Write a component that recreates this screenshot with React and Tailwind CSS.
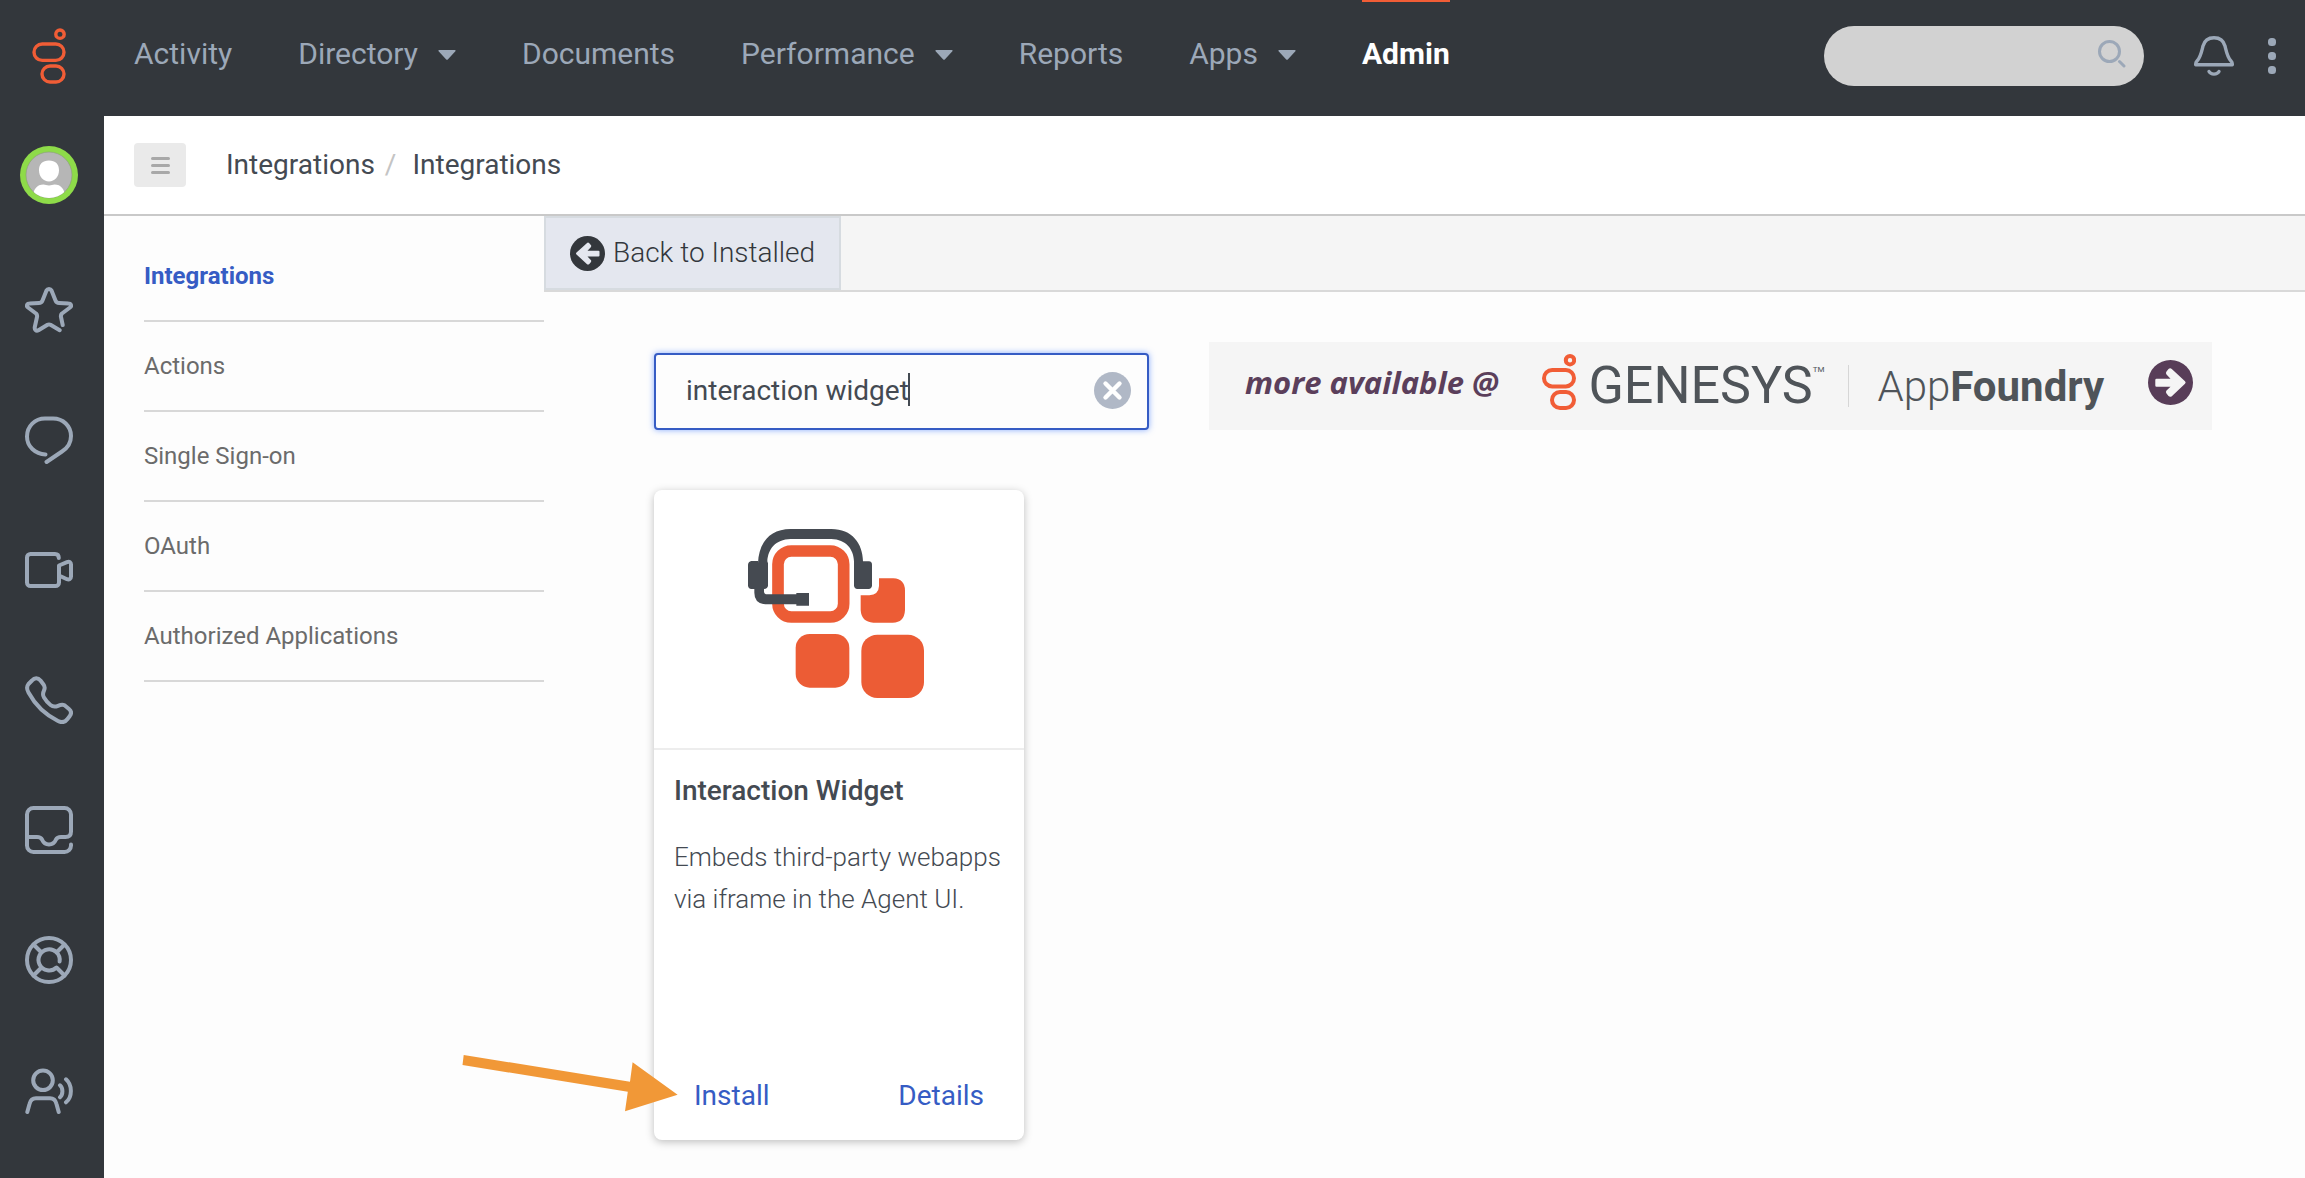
import React from "react";

const NAV = [
  { label: "Activity" },
  { label: "Directory", menu: true },
  { label: "Documents" },
  { label: "Performance", menu: true },
  { label: "Reports" },
  { label: "Apps", menu: true },
  { label: "Admin", active: true },
];

const SECTIONS = ["Integrations", "Actions", "Single Sign-on", "OAuth", "Authorized Applications"];

function GenesysMark({ className, stroke }) {
  return (
    <svg viewBox="0 0 34 56" className={className} fill="none" stroke="#f15d36" strokeWidth={stroke} aria-hidden="true">
      <circle cx="28" cy="6.2" r="4.2" />
      <rect x="2" y="16" width="30" height="16.4" rx="8.2" />
      <rect x="10" y="38" width="22" height="16" rx="8" />
    </svg>
  );
}

function RailIcon({ label, children }) {
  return (
    <button type="button" aria-label={label} className="block size-12 cursor-pointer">
      <svg viewBox="0 0 48 48" className="size-12" fill="none" stroke="#9ca8b8" strokeWidth="4" strokeLinecap="round" strokeLinejoin="round">
        {children}
      </svg>
    </button>
  );
}

function Rail() {
  return (
    <nav aria-label="Tools" className="flex w-[104px] shrink-0 flex-col items-center gap-[82px] pt-[30px] pr-1.5">
      <button type="button" aria-label="Profile" className="size-[58px]">
        <svg viewBox="0 0 58 58" className="size-[58px]">
          <defs>
            <clipPath id="face"><circle cx="29" cy="29" r="23" /></clipPath>
          </defs>
          <circle cx="29" cy="29" r="29" fill="#8edb49" />
          <circle cx="29" cy="29" r="23" fill="#b6b6b6" stroke="#8a9a7c" strokeWidth="0.6" />
          <g clipPath="url(#face)" fill="#fff">
            <path d="M29 14.5c6.500 0 10 3.500 10 9.800 0 6.400-4.200 11.200-10 11.200s-10-4.800-10-11.200c0-6.300 3.500-9.800 10-9.800z" />
            <path d="M13 52c0-9 4-13.500 10.500-13.500 2 0 3 1 5.500 1s3.500-1 5.500-1C41 38.500 45 43 45 52z" />
          </g>
        </svg>
      </button>
      <RailIcon label="Favorites">
        <path d="M37.700 39L36 31Q35.500 29 37 27.500L45 21.500C47 20 46 17.500 43.500 17.500L34 17Q31.500 17 30.500 14.500L26.500 4.500C25.500 2.500 22.500 2.500 21.500 4.500L17.500 14.500Q16.500 17 14 17L4.500 17.500C2 17.500 1 20 3 21.500L11 27.500Q12.500 29 12 31L9.800 41C9.300 43.500 11 45.500 13.500 44.200L22.500 38.800Q24 38 25.500 38.800L34.700 44.200" />
      </RailIcon>
      <RailIcon label="Chat">
        <path d="M20.500 38.400C10 38 2 30.500 2 20.500C2 10 10 2.500 20 2.500H28C38 2.500 46 10 46 20C46 27 42.500 32 37 35.500L21.500 46" />
      </RailIcon>
      <RailIcon label="Video">
        <path d="M33.800 12C33.800 9.500 32.500 8 30 8H5.500A3.500 3.500 0 0 0 2 11.500V36.500A3.500 3.500 0 0 0 5.500 40H30.500A3.500 3.500 0 0 0 34 36.500V19.500L42 16.200C44.500 15.200 46 16.500 46 18.500V30.500C46 33 44 34 42 33.200L34 29.500" />
      </RailIcon>
      <RailIcon label="Calls">
        <path d="M7 4.500C9.500 1.500 13 1.500 15.500 4.500L18.500 8.500C20.300 11 20 12.500 19 14.500C17.500 17.500 17.500 19 19 21.500C20.500 24 23.500 27.500 25.500 29C28 31 30 31 33 29.800C35.500 28.800 37 28 39.500 29.300L44 33C46.500 35 46.500 37.500 44.800 40L42.500 43C40 46.300 36.500 46.800 33 45C19 38 10.500 29.500 3.500 16.500C1.500 13 1.500 10.500 3.500 8Z" />
      </RailIcon>
      <RailIcon label="Inbox">
        <path d="M46 38.500V39.500A6.500 6.500 0 0 1 39.500 46H8.500A6.500 6.500 0 0 1 2 39.500V8.500A6.500 6.500 0 0 1 8.500 2H39.500A6.500 6.500 0 0 1 46 8.500V25.500C46 29 44 31 40.500 31H36C33.500 31 32 31.500 31 33.500C29.500 37 27 38.500 24 38.500C21 38.500 18.500 37 17 33.500C16 31.500 14.500 31 12 31H3" />
      </RailIcon>
      <RailIcon label="Help">
        <circle cx="24" cy="24" r="22" />
        <path d="M34.600 25.500A10.600 10.600 0 1 0 31.500 31.500L39.500 39.500M8.500 8.500L16.500 16.500M39.500 8.500L31.500 16.500M8.500 39.500L16.500 31.500" />
      </RailIcon>
      <RailIcon label="Agent">
        <circle cx="18" cy="14.300" r="9.800" />
        <path d="M2.300 46L4.500 38C5.500 34 7.500 32.300 11 32.300H25C28.500 32.300 30.500 34 31.500 38L33.700 46M35 19.300C38.200 22 38.200 28.500 35 31.300M41 13.300C47.500 19 47.500 31 41 36.300" />
      </RailIcon>
    </nav>
  );
}

function TopBar() {
  return (
    <header className="flex h-[116px] items-center bg-[#33373c] pb-1">
      <a href="#home" aria-label="Home" className="flex w-[104px] shrink-0 items-center pl-8">
        <GenesysMark className="h-14 w-[34px]" stroke="3.4" />
      </a>
      <nav aria-label="Main" className="flex h-full gap-[66px] pl-[30px] text-[30px]">
        {NAV.map((n) => (
          <a
            key={n.label}
            href={"#" + n.label.toLowerCase()}
            className={
              n.active
                ? "flex items-center border-t-2 border-[#f15d36] pb-2 font-bold text-white"
                : "flex items-center gap-5 border-t-2 border-transparent pb-2 text-[#9ca8b8]"
            }
          >
            {n.label}
            {n.menu && (
              <svg viewBox="0 0 18 10" className="mt-1 h-2.5 w-[18px]" fill="#9ca8b8" aria-hidden="true">
                <path d="M1.200 0H16.800Q18.300 0 17.400 1.200L10 9.300Q9 10.400 8 9.300L0.600 1.200Q-0.300 0 1.200 0Z" />
              </svg>
            )}
          </a>
        ))}
      </nav>
      <div className="ml-auto flex items-center pr-[29px]">
        <label className="flex h-[60px] w-80 items-center rounded-full bg-[#d2d2d2] pr-[18px] pl-8">
          <input type="search" aria-label="Search" className="min-w-0 flex-1 bg-transparent text-[28px] outline-none" />
          <svg viewBox="0 0 28 28" className="mb-1 size-7" fill="none" stroke="#9ca8b8" strokeWidth="3" strokeLinecap="round" aria-hidden="true">
            <circle cx="11.500" cy="11.500" r="10" />
            <path d="M21.500 21.500L26 26" />
          </svg>
        </label>
        <button type="button" aria-label="Notifications" className="ml-[50px] size-10">
          <svg viewBox="0 0 40 40" className="size-10" fill="none" stroke="#9ca8b8" strokeWidth="3.400" strokeLinecap="round" strokeLinejoin="round">
            <path d="M20 1.700C13.500 1.700 10.300 5 9 10C7.200 17.500 6.500 21.500 3 25Q1.700 26.300 1.700 28V28.800H38.300V28Q38.300 26.300 37 25C33.500 21.500 32.800 17.500 31 10C29.700 5 26.500 1.700 20 1.700Z" />
            <path d="M15 35.500C17 39 23 39 25 35.500" />
          </svg>
        </button>
        <button type="button" aria-label="More" className="ml-[34px] h-9 w-2">
          <svg viewBox="0 0 8 36" className="h-9 w-2" fill="#9ca8b8">
            <rect x="0" y="0" width="8" height="8" rx="3.500" />
            <rect x="0" y="14" width="8" height="8" rx="3.500" />
            <rect x="0" y="28" width="8" height="8" rx="3.500" />
          </svg>
        </button>
      </div>
    </header>
  );
}

function Banner() {
  return (
    <a href="#appfoundry" className="flex h-[88px] min-w-0 flex-1 items-center bg-[#f5f5f5] pr-[19px] pl-9 whitespace-nowrap text-[#4f5459]">
      <span className="pb-2 font-['Open_Sans'] text-[31px] font-bold text-[#5b3f5b] italic">more available @</span>
      <GenesysMark className="mb-2 ml-auto h-14 w-[34px] shrink-0" stroke="4" />
      <span className="ml-3 flex items-start">
        <span className="text-[52px] leading-[60px]">GENESYS</span>
        <span className="mt-2.5 text-[8px] leading-none">TM</span>
      </span>
      <span className="ml-6 h-[42px] w-px bg-[#d6d6d6]" />
      <span className="ml-7 text-[42px] font-light">
        App<span className="font-bold">Foundry</span>
      </span>
      <svg viewBox="0 0 45 45" className="mb-2 ml-auto size-[45px] shrink-0" aria-hidden="true">
        <circle cx="22.500" cy="22.500" r="22.500" fill="#583d58" />
        <path d="M8.500 18.800H22.500L18.500 14.500Q17.300 13 18.500 11.500L20.500 9Q22.200 7.500 23.800 9L37 21.200Q38.300 22.500 37 23.800L23.800 36.200Q22.200 37.500 20.500 36L18.500 33.500Q17.300 32 18.500 30.500L22.500 26.700H8.500Q7.300 26.700 7.300 25.500V20Q7.300 18.800 8.500 18.800Z" fill="#f5f5f5" />
      </svg>
    </a>
  );
}

function WidgetLogo() {
  return (
    <svg viewBox="324 147 528 507" className="h-[169px] w-44" aria-hidden="true">
      <rect x="414" y="213" width="197" height="198" rx="40" fill="none" stroke="#ec5c35" strokeWidth="35" />
      <g fill="#ec5c35">
        <path d="M717 295H760Q795 297 795 332V390Q793 428 758 428H700Q664 426 662 390V346H688Q716 344 717 318Z" />
        <rect x="467" y="462" width="161" height="161" rx="42" />
        <rect x="664" y="464" width="188" height="190" rx="48" />
      </g>
      <g fill="#454a51">
        <path d="M354 250C356 190 388 147 452 147H574C636 147 668 190 669 244H687Q696 245 696 254V317Q695 326 686 327H652Q643 326 642 317V244C641 208 618 178 574 177H452C406 178 384 208 382 244L384 250V317Q383 325 372 327V335Q373 343 382 343H469V339H507V377H469V373H376Q343 370 343 338V327H334Q325 326 324 317V254Q325 245 334 243H354Z" />
      </g>
    </svg>
  );
}

function WidgetCard() {
  return (
    <article className="relative flex min-h-[650px] w-[370px] flex-col rounded-lg bg-white text-[#444a52] shadow-[0_2px_8px_rgba(0,0,0,0.25)]">
      <div className="flex h-[260px] justify-center border-b-2 border-[#ededed] pt-[39px] pr-1.5">
        <WidgetLogo />
      </div>
      <div className="flex flex-1 flex-col px-5 pt-5">
        <h2 className="text-[28px] leading-[42px] font-medium">Interaction Widget</h2>
        <p className="mt-6 text-[26px] leading-[42px] font-light">Embeds third-party webapps via iframe in the Agent UI.</p>
      </div>
      <div className="flex justify-between px-10 pb-6 text-[28px] leading-[40px] text-[#365cc4]">
        <button type="button" className="cursor-pointer">Install</button>
        <button type="button" className="cursor-pointer">Details</button>
      </div>
      <svg viewBox="0 0 216 58" className="pointer-events-none absolute top-[564px] -left-48 h-[58px] w-[216px]" aria-hidden="true">
        <path d="M1.700 1L168 27.700L170.600 8.300L215.600 40.700L163 57.300L165.800 37.700L0.500 11Z" fill="#f19837" />
      </svg>
    </article>
  );
}

export default function App() {
  return (
    <div className="flex min-h-screen flex-col bg-[#33373c] font-[Roboto,sans-serif]">
      <TopBar />
      <div className="flex flex-1">
        <Rail />
        <main className="flex min-w-0 flex-1 flex-col bg-[#fdfdfd]">
          <div className="flex h-[100px] items-center border-b-2 border-[#c9c9c9] bg-white px-[30px] text-[28px] text-[#444a52]">
            <button type="button" aria-label="Toggle menu" className="flex h-11 w-[52px] flex-col items-center justify-center gap-1 rounded bg-[#eaeaea]">
              <span className="h-[3px] w-[19px] rounded-full bg-[#a8a8a8]" />
              <span className="h-[3px] w-[19px] rounded-full bg-[#a8a8a8]" />
              <span className="h-[3px] w-[19px] rounded-full bg-[#a8a8a8]" />
            </button>
            <ol className="ml-10 flex items-center">
              <li><a href="#admin">Integrations</a></li>
              <li aria-hidden="true" className="ml-2.5 text-[#c4c4c4]">/</li>
              <li className="ml-4"><a href="#integrations">Integrations</a></li>
            </ol>
          </div>
          <div className="flex flex-1">
            <nav aria-label="Integrations" className="ml-10 w-[400px] shrink-0 pt-4 text-2xl">
              {SECTIONS.map((s, i) => (
                <a
                  key={s}
                  href={"#" + s}
                  className={
                    i === 0
                      ? "flex h-[90px] items-center border-b-2 border-[#d8d8d8] font-bold text-[#365cc4]"
                      : "flex h-[90px] items-center border-b-2 border-[#d8d8d8] text-[#6b6b6b]"
                  }
                >
                  {s}
                </a>
              ))}
            </nav>
            <div className="min-w-0 flex-1">
              <div className="flex h-[76px] border-b-2 border-[#d9d9d9] bg-[#f5f5f5]">
                <button type="button" className="flex items-center gap-2 border-2 border-[#d6dbe0] bg-[#e4e7ef] px-6 text-[28px] font-light text-[#33373c]">
                  <svg viewBox="0 0 35 35" className="size-[35px]" aria-hidden="true">
                    <circle cx="17.500" cy="17.500" r="17.500" fill="#33373c" />
                    <path d="M28.500 14.700H17.500L20.800 11.200Q21.700 10 20.800 9L19.300 7.200Q18 6 16.800 7.200L6.500 16.500Q5.500 17.500 6.500 18.500L16.800 28Q18 29 19.300 28L20.800 26.200Q21.700 25 20.800 24L17.500 20.500H28.500Q29.500 20.500 29.500 19.500V15.700Q29.500 14.700 28.500 14.700Z" fill="#e4e7ef" />
                  </svg>
                  Back to Installed
                </button>
              </div>
              <div className="pt-[50px] pr-[93px] pb-[38px] pl-[110px]">
                <div className="flex items-end gap-[60px]">
                  <div className="relative w-[495px] shrink-0">
                    <input
                      type="text"
                      aria-label="Search integrations"
                      defaultValue="interaction widget"
                      className="h-[77px] w-full rounded border-2 border-[#365cc4] bg-[#fdfdfd] pr-16 pb-0.5 pl-[30px] text-[28px] text-[#444a52] shadow-[0_0_6px_rgba(60,120,255,0.6)] outline-none"
                    />
                    <span className="absolute top-5 left-[254px] h-[33px] w-0.5 bg-[#444a52]" />
                    <button type="button" aria-label="Clear" className="absolute top-[19px] right-[18px] size-[37px]">
                      <svg viewBox="0 0 37 37" className="size-[37px]">
                        <circle cx="18.500" cy="18.500" r="18.500" fill="#b0b8c6" />
                        <path d="M11.500 11.500L25.500 25.500M25.500 11.500L11.500 25.500" stroke="#fff" strokeWidth="4.400" strokeLinecap="round" />
                      </svg>
                    </button>
                  </div>
                  <Banner />
                </div>
                <div className="mt-[60px] flex flex-wrap">
                  <WidgetCard />
                </div>
              </div>
            </div>
          </div>
        </main>
      </div>
    </div>
  );
}
